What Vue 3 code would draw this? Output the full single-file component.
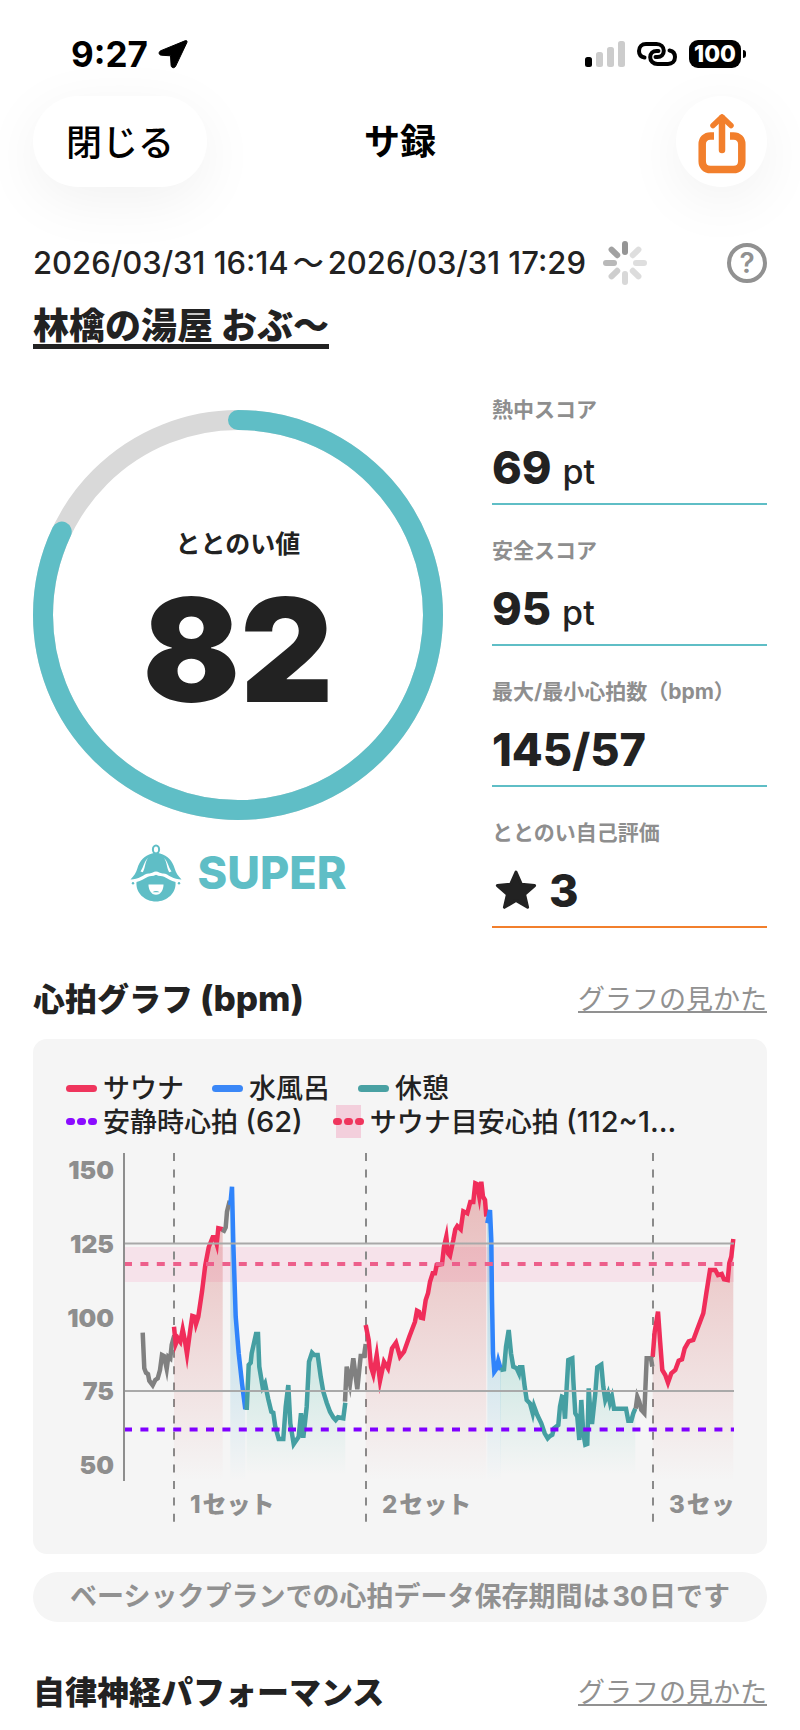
<script setup>
const stats = [
  { label: '熱中スコア', value: '69', unit: 'pt', tone: 'teal' },
  { label: '安全スコア', value: '95', unit: 'pt', tone: 'teal' },
  { label: '最大/最小心拍数（bpm）', value: '145/57', tone: 'teal' },
  { label: 'ととのい自己評価', value: '3', star: true, tone: 'orange' },
]

const score = 82
const ringRadius = 195
const ringLength = 2 * Math.PI * ringRadius
const ringDash = `${(ringLength * score) / 100} ${ringLength}`

const spinner = [
  { angle: 0, opacity: 0.9 },
  { angle: 45, opacity: 0.28 },
  { angle: 90, opacity: 0.28 },
  { angle: 135, opacity: 0.3 },
  { angle: 180, opacity: 0.33 },
  { angle: 225, opacity: 0.42 },
  { angle: 270, opacity: 0.6 },
  { angle: 315, opacity: 0.8 },
]

// Samples are stored at three units per chart pixel, relative to an x origin.
const UNIT = 3
const FLOOR = 341
const traces = [
  { kind: 'gap', origin: 0, samples: '278,578 283,685 288,698 294,702 298,722 308,736 316,720 323,715 330,690 336,645 342,648 350,686 355,650 361,655 365,615 373,586' },
  { kind: 'sauna', origin: 0, samples: '372,560 377,612 384,595 391,605 398,568 404,598 411,642 420,575 427,528 434,530 438,552 445,530 456,455 466,375 476,322 484,302 488,292 494,292 500,312 505,265 518,268' },
  { kind: 'gap', origin: 0, samples: '519,278 527,262 531,215 539,182' },
  { kind: 'water', origin: 0, samples: '541,195 546,140 550,310 557,530 566,640 576,730 586,808' },
  { kind: 'rest', origin: 0, samples: '590,810 596,675 602,668 605,640 618,582 624,582 628,680 638,742 645,730 655,778 664,815 670,818 676,860 686,897 700,897 707,800 715,735 721,850 731,912 746,890 753,820 760,893 770,800 777,665 786,638 793,645 803,645 812,710 820,755 830,788 840,815 850,832 857,840 864,832 880,835 886,788' },
  { kind: 'gap', origin: 750, samples: '135,785 140,680 150,732 160,655 172,748 182,648 192,648 197,612' },
  { kind: 'sauna', origin: 750, samples: '197,555 206,600 213,680 220,703 230,645 240,722 252,665 264,685 276,625 288,608 300,650 312,635 328,590 345,545 351,512 357,515 362,533 369,535 377,480 384,460 390,425 398,400 405,400 410,375 426,372 432,320 439,290 444,340 450,347 460,300 466,268 472,258 482,268 490,214 502,220 511,186 520,186 526,130 531,132 538,170 544,125 549,170 555,180 559,230' },
  { kind: 'water', origin: 750, samples: '562,250 570,210 574,300 576,480 579,640 583,695 590,685 595,662 603,690' },
  { kind: 'rest', origin: 750, samples: '601,690 612,688 618,620 626,570 633,640 640,680 650,685 657,700 660,682 667,682 674,740 680,780 690,790 698,820 702,798 712,825 724,850 734,880 743,895 750,888 757,884 762,865 775,855 780,800 786,770 790,772 795,836 800,740 805,660 817,655 820,720 826,820 832,830 838,900 844,780 850,880 856,914 862,912 866,745 870,800 876,852 886,760 892,682 904,674 910,740 916,780 924,760 930,788 936,770 942,806 978,806 985,842 994,842 1000,820 1006,806' },
  { kind: 'gap', origin: 1470, samples: '287,806 292,770 298,785 304,810 313,820 320,655 333,655 337,680' },
  { kind: 'sauna', origin: 1470, samples: '338,650 344,575 354,515 360,600 367,690 376,705 384,728 394,700 406,690 416,662 426,658 434,625 446,604 460,600 470,572 490,520 499,460 510,390 526,390 534,405 545,402 552,418 563,420 568,370 574,350 580,297' },
]

const lines = traces.map((t) => {
  const pts = t.samples.split(' ').map((pair) => {
    const [x, y] = pair.split(',').map(Number)
    return [((x + t.origin) / UNIT).toFixed(1), (y / UNIT).toFixed(1)]
  })
  const line = 'M' + pts.map((p) => p.join(' ')).join('L')
  const area = `${line}L${pts[pts.length - 1][0]} ${FLOOR}L${pts[0][0]} ${FLOOR}Z`
  return { kind: t.kind, line, area }
})
const areas = lines.filter((l) => l.kind !== 'gap')

const ticks = [
  { value: 150, y: 30 },
  { value: 125, y: 104 },
  { value: 100, y: 178 },
  { value: 75, y: 251 },
  { value: 50, y: 325 },
]
const sets = [
  { x: 124, number: 1, name: 'セット' },
  { x: 316, number: 2, name: 'セット' },
  { x: 603, number: 3, name: 'セッ' },
]
</script>

<template>
  <div class="screen">
    <div class="status">
      <div class="clock">
        <span>9:27</span>
        <svg width="30" height="30" viewBox="0 0 30 30" aria-hidden="true">
          <path d="M27.5 1.6 2.8 11.7C.3 12.8.7 16 3.3 16.2l9.2.6.6 9.6c.2 2.7 3.5 3.2 4.6.7L28.9 3.5c.5-1.300-.2-2.300-1.400-1.900Z" stroke="#000" stroke-width="1" stroke-linejoin="round" />
        </svg>
      </div>
      <div class="indicators">
        <svg width="40" height="26" viewBox="0 0 40 26" aria-hidden="true">
          <rect x="0" y="16" width="7" height="10" rx="2.500" fill="#000" />
          <rect x="11" y="11" width="7" height="15" rx="2.500" fill="#ccc" />
          <rect x="22" y="6" width="7" height="20" rx="2.500" fill="#ccc" />
          <rect x="33" y="0" width="7" height="26" rx="2.500" fill="#ccc" />
        </svg>
        <svg width="40" height="26" viewBox="0 0 40 26" fill="none" stroke="#000" stroke-width="4" stroke-linecap="round" aria-hidden="true">
          <path d="M7.500 16.500C4 15.800 2 13.300 2 9.900 2 5.700 5 3 9 3h10.500c4.300 0 7.300 3 7.300 6.800 0 3.500-2.600 6.200-6.300 6.200h-2" />
          <path d="M32.500 9.500c3.500.7 5.500 3.200 5.500 6.600 0 4.200-3 6.900-7 6.900H20.500c-4.300 0-7.300-3-7.300-6.800 0-3.500 2.600-6.200 6.300-6.200h2" />
        </svg>
        <div class="battery"><span>100</span><i></i></div>
      </div>
    </div>

    <header class="nav">
      <button class="close" type="button">閉じる</button>
      <h1>サ録</h1>
      <button class="share" type="button" aria-label="共有">
        <svg width="48" height="62" viewBox="0 0 48 62" fill="none" stroke="#f27f2c" aria-hidden="true">
          <path d="M16 23h-3.500C7.500 23 4.200 26.300 4.200 31.300v17c0 5 3.300 8.300 8.300 8.300h23c5 0 8.300-3.300 8.300-8.300v-17c0-5-3.300-8.300-8.300-8.300H32" stroke-width="7.500" />
          <path d="M24 5v32" stroke-width="6.500" stroke-linecap="round" />
          <path d="M15 12.500 24 4l9 8.500" stroke-width="5.500" stroke-linecap="round" stroke-linejoin="round" />
        </svg>
      </button>
    </header>

    <main>
      <div class="period">
        <span>2026/03/31 16:14<span class="tilde">〜</span>2026/03/31 17:29</span>
        <svg class="spinner" width="46" height="46" viewBox="-23 -23 46 46" aria-hidden="true">
          <rect v-for="s in spinner" :key="s.angle" x="-3" y="-22" width="6" height="14" rx="3" fill="#8a8a8a" :opacity="s.opacity" :transform="`rotate(${s.angle})`" />
        </svg>
        <button class="help" type="button" aria-label="ヘルプ">?</button>
      </div>
      <a class="place" href="#">林檎の湯屋 おぶ〜</a>

      <section class="summary">
        <div class="total">
          <div class="ring">
            <svg viewBox="0 0 410 410" fill="none" stroke-width="20" aria-hidden="true">
              <circle cx="205" cy="205" :r="ringRadius" stroke="#d9d9d9" />
              <circle cx="205" cy="205" :r="ringRadius" stroke="#5fbec6" stroke-linecap="round" :stroke-dasharray="ringDash" transform="rotate(-90 205 205)" />
            </svg>
            <div class="ring-text">
              <span class="ring-label">ととのい値</span>
              <strong>{{ score }}</strong>
            </div>
          </div>
          <div class="rank">
            <svg width="52" height="58" viewBox="0 0 52 58" aria-hidden="true">
              <g fill="#5fbec6">
                <ellipse cx="26" cy="5.500" rx="3.100" ry="4" fill="none" stroke="#5fbec6" stroke-width="2" />
                <path d="M24 9.500h4l1 2H23Z" />
                <path d="M22 9.500c2.500-1 5.500-1 8 0 8 2 12.500 8 14.500 14.500 1.300 4.500 3.500 8 7 11.500-4 0-7-1-10.500-2.800-3-1.600-5.200-3.500-8.300-3.300-2.700.2-4-1.900-6.700-1.900s-4 2.100-6.700 1.900c-3.100-.2-5.300 1.700-8.300 3.300C7.500 34.500 4.500 35.500.5 35.500c3.500-3.500 5.700-7 7-11.500C9.500 17.500 14 11.500 22 9.500Z" />
                <path d="M6.500 38c4.500-.8 7.500-3.400 11.500-5.200 2-.9 5-.2 8-2 3 1.800 6 1.100 8 2 4 1.800 7 4.400 11.500 5.200C46.500 49 37 57.500 26 57.500S5.500 49 6.500 38Z" />
                <circle cx="3" cy="39.300" r="1.200" />
                <circle cx="49" cy="39.300" r="1.200" />
              </g>
              <path d="M18.500 13.500c-4.500 3.500-4.500 9-8 14l2.300.7c3-5.500 2-10.500 5.700-14.700ZM33.500 13.500c4.500 3.500 4.500 9 8 14l-2.300.7c-3-5.500-2-10.500-5.700-14.700Z" fill="#fff" />
              <path d="M4 36.500c6 0 9-3.200 13.500-5.200 3-1.300 5.500 0 8.500-1.800 3 1.800 5.500.5 8.500 1.800 4.500 2 7.500 5.200 13.500 5.200" fill="none" stroke="#fff" stroke-width="1.500" />
              <path d="M18.500 40.500h15c0 5-2.500 10.300-7.500 10.300s-7.500-5.300-7.500-10.300Z" fill="#fff" />
              <path d="M22.500 48.200c2-1.600 5-1.600 7 0Z" fill="#5fbec6" />
            </svg>
            <span>SUPER</span>
          </div>
        </div>

        <dl class="stats">
          <div v-for="s in stats" :key="s.label" class="stat" :class="s.tone">
            <dt>{{ s.label }}</dt>
            <dd>
              <svg v-if="s.star" class="star" width="44" height="42" viewBox="0 0 44 42" aria-hidden="true">
                <path d="m22 3 5.400 12.300 13.200 1.200-10 8.800 3 13L22 31.400 10.400 38.300l3-13-10-8.800 13.200-1.200Z" fill="#222" stroke="#222" stroke-width="3" stroke-linejoin="round" />
              </svg>
              <span>{{ s.value }}</span>
              <small v-if="s.unit">{{ s.unit }}</small>
            </dd>
          </div>
        </dl>
      </section>

      <div class="heading">
        <h2>心拍グラフ <span>(bpm)</span></h2>
        <a href="#">グラフの見かた</a>
      </div>
      <section class="card">
        <ul class="legend">
          <li><i class="bar sauna"></i>サウナ</li>
          <li><i class="bar water"></i>水風呂</li>
          <li><i class="bar rest"></i>休憩</li>
        </ul>
        <ul class="legend values">
          <li><i class="dots purple"><b></b><b></b><b></b></i><span>安静時心拍 <em>(62)</em></span></li>
          <li><i class="dots pink"><b></b><b></b><b></b></i><span>サウナ目安心拍 <em>(112~1...</em></span></li>
        </ul>
        <svg class="chart" viewBox="0 0 684 396" role="img" aria-label="心拍グラフ">
          <defs>
            <linearGradient id="fill-sauna" gradientUnits="userSpaceOnUse" x1="0" y1="40" x2="0" y2="341">
              <stop offset="0" stop-color="#c82d2d" stop-opacity=".3" />
              <stop offset="1" stop-color="#c82d2d" stop-opacity="0" />
            </linearGradient>
            <linearGradient id="fill-water" gradientUnits="userSpaceOnUse" x1="0" y1="40" x2="0" y2="341">
              <stop offset="0" stop-color="#2f9cc8" stop-opacity=".45" />
              <stop offset="1" stop-color="#2f9cc8" stop-opacity="0" />
            </linearGradient>
            <linearGradient id="fill-rest" gradientUnits="userSpaceOnUse" x1="0" y1="170" x2="0" y2="335">
              <stop offset="0" stop-color="#2fb09a" stop-opacity=".28" />
              <stop offset="1" stop-color="#2fb09a" stop-opacity="0" />
            </linearGradient>
          </defs>

          <rect x="74" y="107" width="610" height="35" fill="#f6e2ea" />
          <path v-for="s in sets" :key="s.x" :d="`M${s.x} 13V382`" class="set-line" />
          <path v-for="(a, i) in areas" :key="'a' + i" :d="a.area" :fill="`url(#fill-${a.kind})`" />
          <path v-for="(l, i) in lines" :key="'l' + i" :d="l.line" class="trace" :class="l.kind" />
          <path d="M74 103.500H684M74 251H684" class="grid" />
          <path d="M74 124H684" class="target" />
          <path d="M74 289.500H684" class="resting" />
          <path d="M74 13V341" class="axis" />

          <text v-for="t in ticks" :key="t.value" x="64" :y="t.y + 9" class="tick">{{ t.value }}</text>
          <text v-for="s in sets" :key="'s' + s.x" :x="s.x + 16" y="373" class="set-name">{{ s.number }}<tspan dx="2">{{ s.name }}</tspan></text>
        </svg>
      </section>

      <p class="note">ベーシックプランでの心拍データ保存期間は<span>30</span>日です</p>

      <div class="heading second">
        <h2>自律神経パフォーマンス</h2>
        <a href="#">グラフの見かた</a>
      </div>
    </main>
  </div>
</template>

<style>
body {
  background: #fff;
}
</style>

<style scoped>
.screen {
  font-family: Inter, "Noto Sans CJK JP", sans-serif;
  color: #222;
  background: #fff;
  padding-bottom: 15px;
  overflow: hidden;
}
h1, h2, p, dl, dd, ul {
  margin: 0;
  padding: 0;
}
svg {
  display: block;
}
button {
  font: inherit;
  border: 0;
  padding: 0;
  cursor: pointer;
}
.status {
  display: flex;
  justify-content: space-between;
  align-items: center;
  padding: 34px 54px 22px 71px;
  color: #000;
}
.clock {
  display: flex;
  align-items: center;
  gap: 10px;
  font-size: 35px;
  line-height: 40px;
  font-weight: 700;
}
.indicators {
  display: flex;
  align-items: center;
  gap: 12px;
}
.battery {
  display: flex;
  align-items: center;
  gap: 2px;
}
.battery span {
  width: 52px;
  border-radius: 9px;
  background: #000;
  color: #fff;
  font-size: 23px;
  line-height: 28px;
  font-weight: 800;
  text-align: center;
}
.battery i {
  width: 3px;
  height: 8px;
  border-radius: 0 4px 4px 0;
  background: #000;
}
.nav {
  display: grid;
  grid-template-columns: 1fr auto 1fr;
  align-items: center;
  padding: 0 33px;
  color: #000;
}
.close {
  justify-self: start;
  height: 91px;
  padding: 0 33px 4px;
  border-radius: 46px;
  background: #fff;
  color: #000;
  font-size: 36px;
  font-weight: 500;
  box-shadow: 0 14px 60px rgba(0, 0, 0, 0.06);
}
.nav h1 {
  font-size: 36px;
  line-height: 44px;
  font-weight: 700;
}
.share {
  justify-self: end;
  display: grid;
  place-items: center;
  width: 91px;
  height: 91px;
  padding-top: 5px;
  border-radius: 50%;
  background: #fff;
  box-shadow: 0 14px 60px rgba(0, 0, 0, 0.06);
}
main {
  padding: 53px 33px 0;
}
.period {
  display: flex;
  align-items: center;
  height: 46px;
  font-size: 31px;
  line-height: 46px;
  font-weight: 500;
  white-space: nowrap;
}
.tilde {
  margin: 0 4px;
}
.spinner {
  margin-left: 16px;
}
.help {
  margin-left: auto;
  width: 40px;
  height: 40px;
  border: 4px solid #919191;
  border-radius: 50%;
  background: none;
  color: #919191;
  font-size: 28px;
  line-height: 32px;
  font-weight: 600;
}
.place {
  display: table;
  margin-top: 22px;
  border-bottom: 5px solid #222;
  color: #222;
  font-size: 36px;
  line-height: 36px;
  font-weight: 800;
  text-decoration: none;
}
.summary {
  display: grid;
  grid-template-columns: 410fr 275fr;
  column-gap: 49px;
  margin-top: 15px;
}
.total {
  padding-top: 46px;
}
.ring {
  display: grid;
}
.ring > * {
  grid-area: 1 / 1;
}
.ring-text {
  display: flex;
  flex-direction: column;
  align-items: center;
  padding-top: 116px;
}
.ring-label {
  font-size: 25px;
  line-height: 36px;
  font-weight: 700;
}
.ring-text strong {
  font-size: 144px;
  line-height: 176px;
  font-weight: 900;
}
.rank {
  display: flex;
  align-items: center;
  justify-content: center;
  gap: 16px;
  margin-top: 24px;
  color: #5fbec6;
  font-size: 45px;
  line-height: 58px;
  font-weight: 800;
}
.stat {
  padding: 32px 0 9px;
  border-bottom: 2px solid #5fbec6;
}
.stat.orange {
  border-color: #f27f2c;
}
dt {
  margin-bottom: 18px;
  color: #8e8e8e;
  font-size: 21px;
  line-height: 28px;
  font-weight: 700;
  white-space: nowrap;
}
dd {
  display: flex;
  align-items: baseline;
  gap: 11px;
  height: 52px;
  font-size: 45px;
  line-height: 52px;
  font-weight: 800;
}
dd small {
  font-size: 34px;
  font-weight: 500;
}
.star {
  align-self: center;
  margin: 0 0 2px 2px;
}
.heading {
  display: flex;
  align-items: center;
  justify-content: space-between;
  margin-top: 50px;
}
.heading h2 {
  height: 44px;
  font-size: 32px;
  line-height: 44px;
  font-weight: 800;
}
.heading h2 span {
  font-size: 35px;
  line-height: 36px;
}
.heading a {
  color: #919191;
  font-size: 27px;
  line-height: 44px;
  text-decoration-thickness: 2px;
  text-underline-offset: 2px;
}
.card {
  margin-top: 17px;
  padding: 33px 33px 18px 17px;
  border-radius: 14px;
  background: #f5f5f5;
}
.legend {
  display: flex;
  gap: 28px;
  padding-left: 16px;
  list-style: none;
  font-size: 27px;
  line-height: 33px;
  font-weight: 500;
  white-space: nowrap;
}
.legend.values {
  gap: 30px;
}
.legend em {
  font-style: normal;
  font-size: 29px;
}
.legend li {
  display: flex;
  align-items: center;
  gap: 6px;
  height: 33px;
}
.bar {
  width: 31px;
  height: 7px;
  border-radius: 4px;
}
.bar.sauna {
  background: #ef355d;
}
.bar.water {
  background: #3a87f7;
}
.bar.rest {
  background: #49a1a3;
}
.dots {
  display: flex;
  align-items: center;
  justify-content: center;
  gap: 2px;
  width: 31px;
  height: 33px;
}
.dots b {
  width: 9px;
  height: 7px;
  border-radius: 4px;
}
.purple b {
  background: #8a0cff;
}
.pink {
  background: linear-gradient(#f3cfdc, #f3cfdc) center / 25px 33px no-repeat;
}
.pink b {
  background: #ef355d;
}
.chart {
  width: 100%;
  margin-top: 2px;
  overflow: visible;
}
.trace {
  fill: none;
  stroke-width: 4.500;
  stroke-linejoin: miter;
  stroke-miterlimit: 7;
}
.trace.gap {
  stroke: #808080;
}
.trace.sauna {
  stroke: #f02d5a;
}
.trace.water {
  stroke: #3084fb;
}
.trace.rest {
  stroke: #459fa2;
}
.grid {
  stroke: #a9a9a9;
  stroke-width: 2;
}
.axis {
  stroke: #8e8e8e;
  stroke-width: 2;
}
.set-line {
  stroke: #8a8a8a;
  stroke-width: 2;
  stroke-dasharray: 8 8.400;
}
.target {
  stroke: #ed5f8b;
  stroke-width: 4;
  stroke-dasharray: 8 8.400;
}
.resting {
  stroke: #8000ff;
  stroke-width: 4;
  stroke-dasharray: 8 8.400;
}
.tick,
.set-name {
  fill: #8e8e8e;
  font-size: 24px;
  font-weight: 800;
}
.tick {
  font-size: 25px;
  font-weight: 900;
  text-anchor: end;
}
.note {
  margin-top: 18px;
  border-radius: 25px;
  background: #f5f5f5;
  color: #919191;
  font-size: 27px;
  line-height: 50px;
  font-weight: 700;
  text-align: center;
  white-space: nowrap;
}
.note span {
  margin: 0 1px 0 3px;
}
.heading.second {
  margin-top: 49px;
}
</style>
